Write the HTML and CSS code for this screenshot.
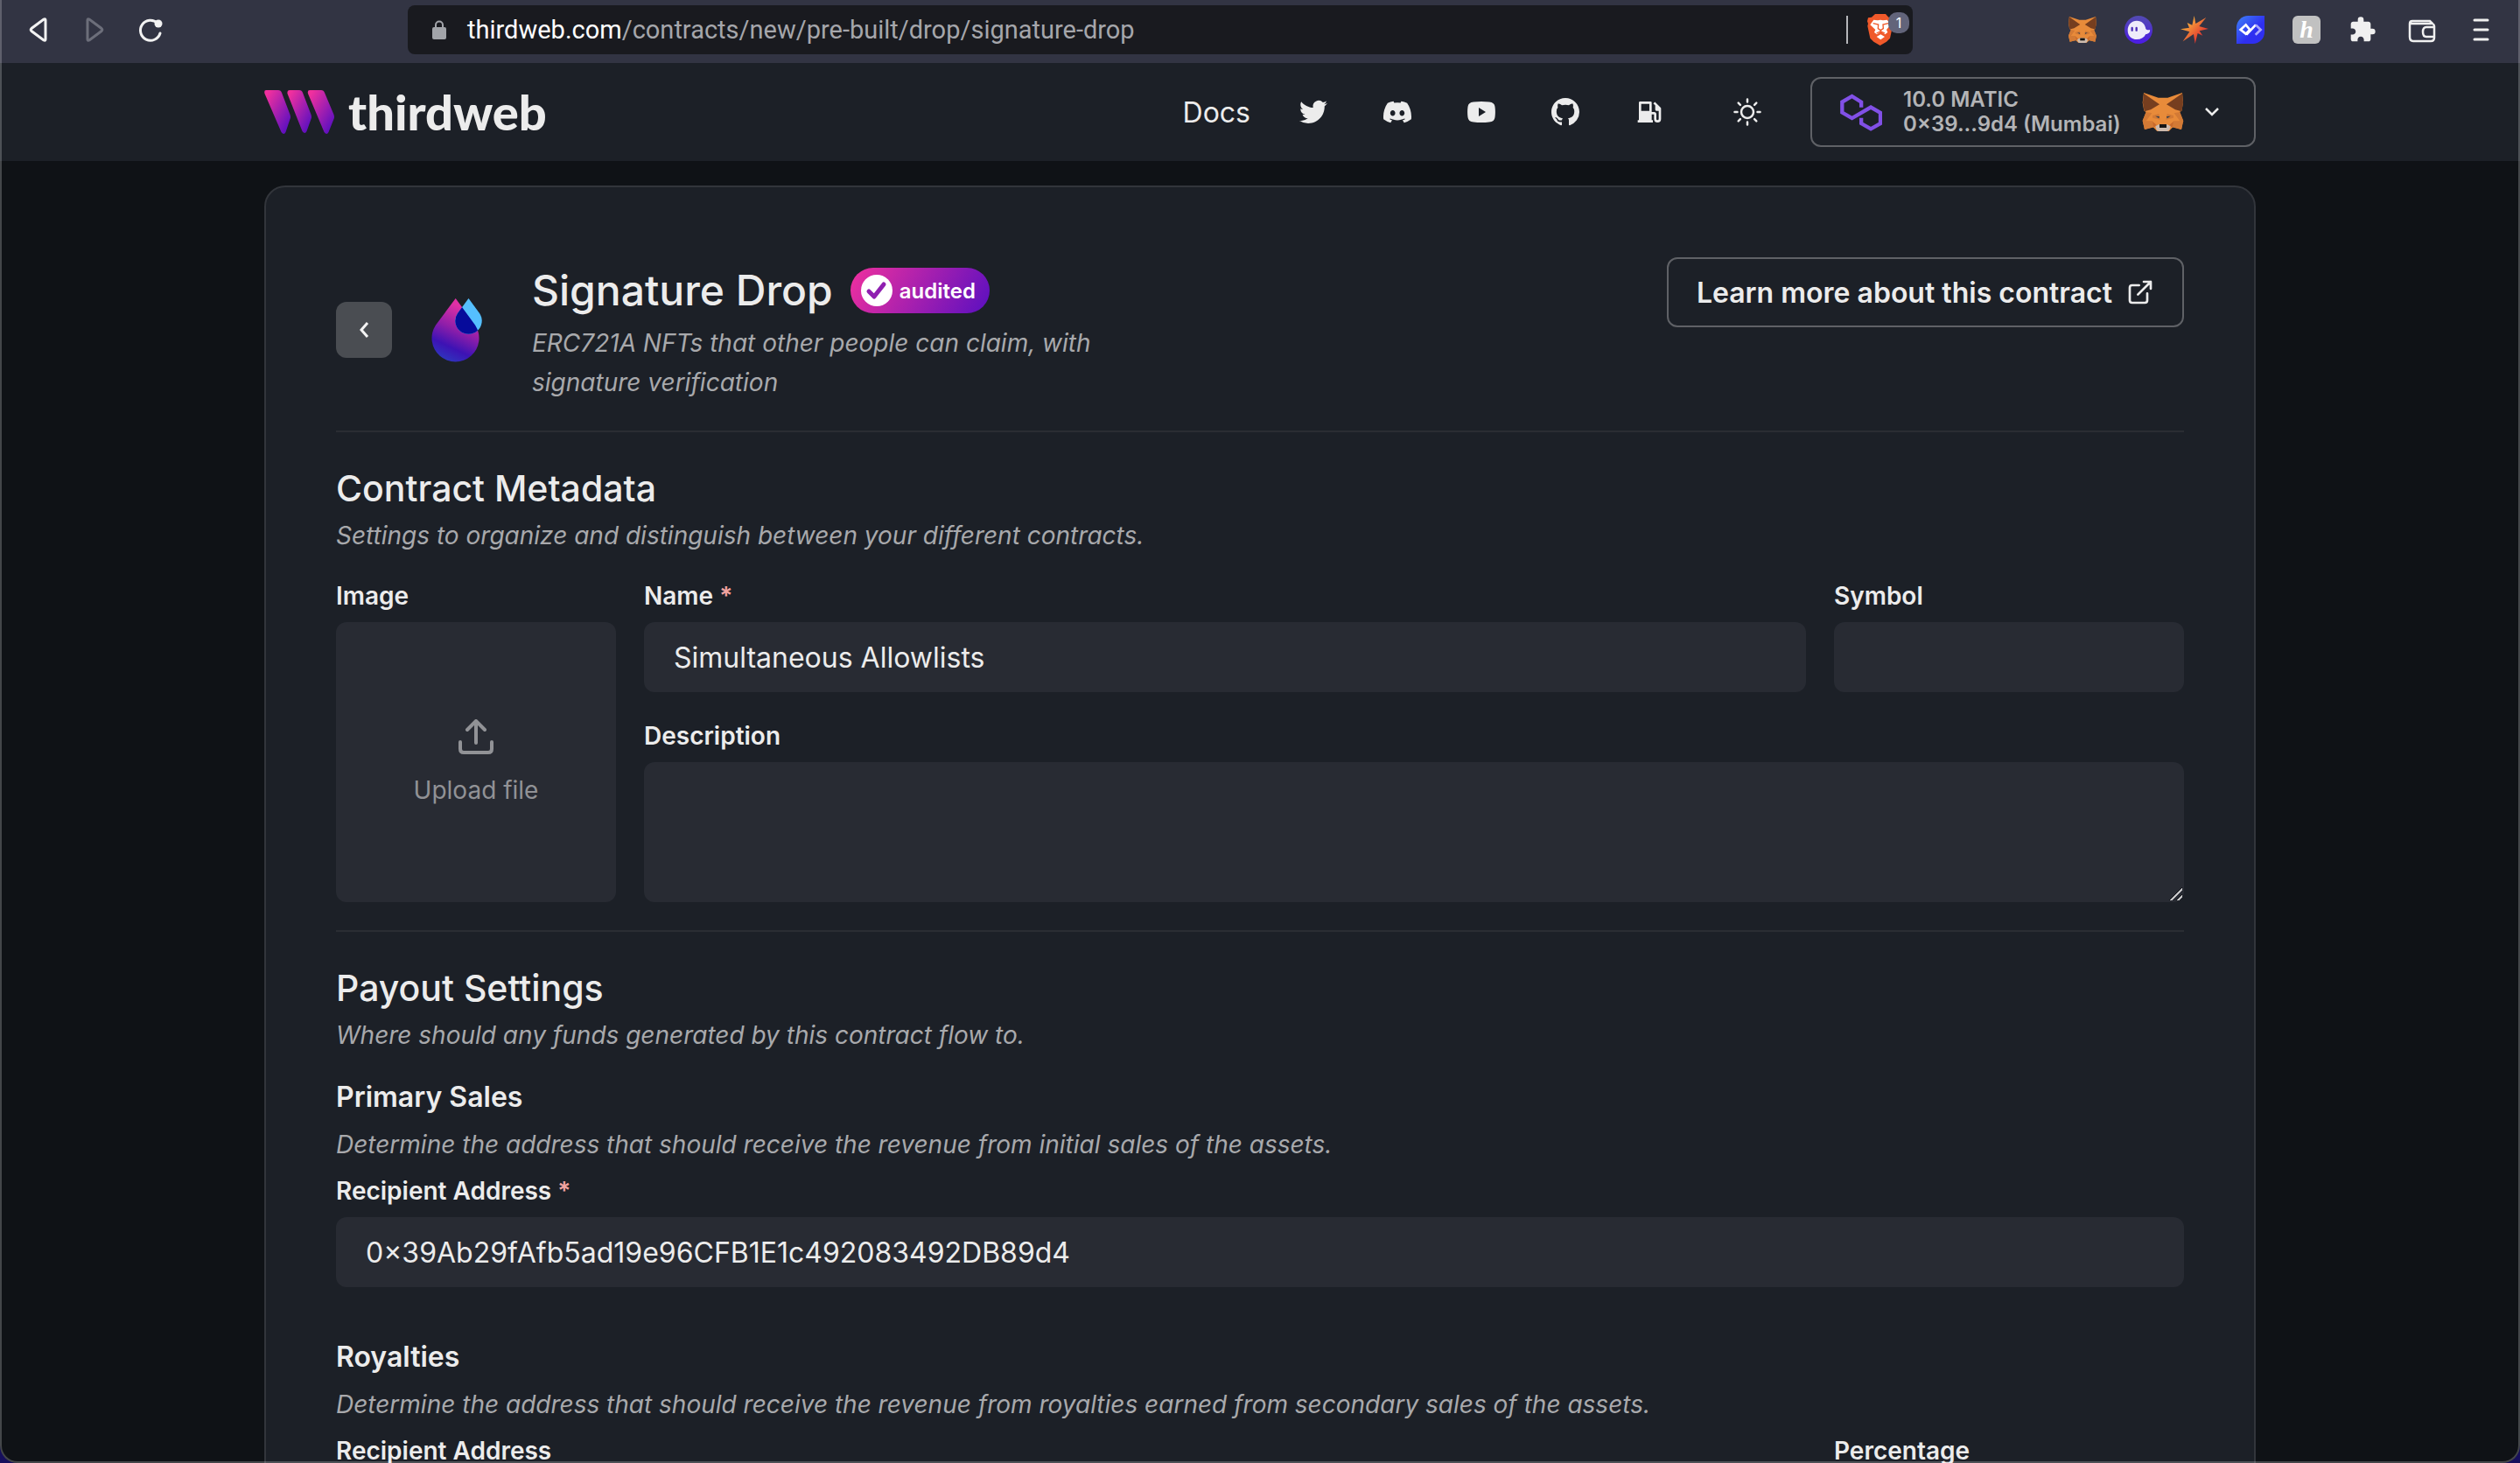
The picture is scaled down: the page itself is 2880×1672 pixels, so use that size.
FILE: index.html
```html
<!DOCTYPE html>
<html lang="en">
<head>
<meta charset="utf-8">
<meta name="viewport" content="width=device-width, initial-scale=1">
<title>Signature Drop | thirdweb</title>
<link rel="stylesheet" href="styles.css">
</head>
<body>
<svg class="defs" aria-hidden="true">
  <defs>
    <linearGradient id="brand" x1="0" y1="0" x2="1" y2="1">
      <stop offset="0.1" stop-color="#f0309e"/><stop offset="0.9" stop-color="#5a0fc0"/>
    </linearGradient>
    <symbol id="fox" viewBox="0 0 140 132">
      <path fill="#e88b3a" d="M4 0 54 17H86L136 0l3 34-5 28-7 4 12 29-6 31-29-8-14 14H50l-14-14-29 8-7-31 12-29-7-4-5-28z"/>
      <path fill="#763e1f" d="M4 2 58 40 28 58 6 64 1 34zM136 2 82 40l30 18 22 6 5-30z"/>
      <path fill="#d37a35" d="M0 97h34l6 21-33 8zM140 97h-34l-6 21 33 8zM34 78l22-6 4 20-26-6zM106 78l-22-6-4 20 26-6zM12 66l20 4-20 27H0zM128 66l-20 4 20 27h12z"/>
      <path fill="#c86a2c" d="M34 98l18 16-14 4zM106 98l-18 16 14 4z"/>
      <path fill="#cdbbae" d="M44 114l14-6h24l14 6-4 14-8 4H56l-8-4z"/>
      <path fill="#161616" d="M58 108h24v12H58z"/>
      <path fill="#3b3f4a" d="M44 80l14 1-2 7zM96 80l-14 1 2 7z"/>
    </symbol>
  </defs>
</svg>

<div class="window">
  <header class="browser">
    <div class="browser-nav">
      <button class="icon-btn" aria-label="Back"><svg width="32" height="32" viewBox="-4 0 32 32"><path d="M20 5v22q0 2-2 1L4 17.500q-1.500-1.500 0-3L18 4q2-1 2 1z" fill="none" stroke="#f2f2f2" stroke-width="3"/></svg></button>
      <button class="icon-btn" aria-label="Forward"><svg width="32" height="32" viewBox="-4 0 32 32"><path d="M4 5v22q0 2 2 1l14-10.500q1.500-1.500 0-3L6 4Q4 3 4 5z" fill="none" stroke="#6c6e7a" stroke-width="3"/></svg></button>
      <button class="icon-btn" aria-label="Reload"><svg width="32" height="32" viewBox="0 0 32 32"><path d="M24 8.500A11.500 11.500 0 1 0 27 20" fill="none" stroke="#f2f2f2" stroke-width="3" stroke-linecap="round"/><circle cx="25" cy="9" r="4.500" fill="#f2f2f2"/></svg></button>
    </div>
    <div class="address">
      <svg width="16" height="22" viewBox="0 0 16 22" aria-hidden="true"><path d="M4 9V5.500a4 4 0 0 1 8 0V9" fill="none" stroke="#a2a4a9" stroke-width="2"/><rect y="8" width="16" height="14" rx="2" fill="#a2a4a9"/></svg>
      <span class="url"><span class="host">thirdweb.com</span>/contracts/new/pre-built/drop/signature-drop</span>
      <span class="bar"></span>
      <button class="icon-btn brave" aria-label="Brave Shields">
        <svg width="30" height="36" viewBox="0 0 90 108"><path fill="#f0592a" d="M27 0h36l10 11 12 2 3 12-3 8 2 8-9 42-12 12-22 13-22-13-12-12L1 41l2-8-3-8 3-12 12-2z"/><path fill="#fff" d="M22 20l14 2 9-2 9 2 14-2 12 17-14 17 4 9-9 7-14-10-14 10-9-7 4-9L10 37zM32 78l14-8 14 8-14 10z"/><path fill="none" stroke="#f0592a" stroke-width="4" d="M20 32l18 4-1 14 9 6 9-6-1-14 18-4M46 56v7M32 66l14-7 14 7"/></svg>
        <span class="count">1</span>
      </button>
    </div>
    <div class="extensions">
      <button class="icon-btn" aria-label="MetaMask"><svg width="32" height="32"><use href="#fox"/></svg></button>
      <button class="icon-btn" aria-label="Phantom"><svg width="32" height="32" viewBox="0 0 96 96"><defs><linearGradient id="ph" x1="0" y1="0" x2="0" y2="1"><stop stop-color="#534bb1"/><stop offset="1" stop-color="#4c1be6"/></linearGradient></defs><circle cx="48" cy="48" r="48" fill="url(#ph)"/><path fill="#eeebfa" d="M11 50c0-20 14-33 31-33 18 0 29 12 31 28 2 4 9 5 14 3 2 8-5 15-14 15-6 12-17 18-31 18-18 0-31-12-31-31z"/><path stroke="#4a2bb8" stroke-width="7" stroke-linecap="round" d="M26 42v8M41 42v8"/></svg></button>
      <button class="icon-btn" aria-label="Spark"><svg width="32" height="32" viewBox="0 0 96 96"><defs><linearGradient id="sp" x1="0" y1="0" x2="1" y2="1"><stop offset=".2" stop-color="#f8b33c"/><stop offset=".8" stop-color="#e0282e"/></linearGradient></defs><path fill="url(#sp)" d="M47 0l5 27L88 6 64 36l32 9-31 7 11 16-17-8-9 36-5-33L8 88l23-33L0 46l30-5-7-17 17 8z"/></svg></button>
      <button class="icon-btn" aria-label="Wallet extension"><svg width="32" height="32" viewBox="0 0 96 96"><defs><linearGradient id="bl" x1="0" y1="0" x2="1" y2="1"><stop stop-color="#3f83f8"/><stop offset=".6" stop-color="#2f2ff0"/></linearGradient></defs><path fill="url(#bl)" d="M40 0h56v56a40 40 0 0 1-40 40H0V40A40 40 0 0 1 40 0z"/><path fill="none" stroke="#fff" stroke-width="8" d="M46 48L32 62 14 48l18-17 14 17M34 65l32-34"/><path fill="none" stroke="#a9a7fb" stroke-width="8" d="M66 31l17 17-18 17"/></svg></button>
      <button class="icon-btn" aria-label="Honey"><svg width="32" height="32" viewBox="0 0 32 32"><rect width="32" height="32" rx="6" fill="#c1c1c1"/><text x="16" y="25" class="honey" text-anchor="middle">h</text></svg></button>
      <button class="icon-btn" aria-label="Extensions"><svg width="32" height="32" viewBox="0 0 24 24"><path fill="#f0f0f0" d="M20.500 11H19V7c0-1.100-.9-2-2-2h-4V3.500a2.500 2.500 0 0 0-5 0V5H4c-1.100 0-1.990.9-1.990 2v3.800H3.500c1.490 0 2.700 1.210 2.700 2.700s-1.210 2.700-2.700 2.700H2V20c0 1.100.9 2 2 2h3.800v-1.500c0-1.490 1.210-2.700 2.700-2.700s2.700 1.210 2.700 2.700V22H17c1.100 0 2-.9 2-2v-4h1.500a2.500 2.500 0 0 0 0-5z"/></svg></button>
      <button class="icon-btn builtin" aria-label="Wallet"><svg width="32" height="32" viewBox="0 0 32 32"><path fill="none" stroke="#f0f0f0" stroke-width="2.500" d="M30 13v-1q0-2-2-3l-3-3H5Q2 6 2 9v15q0 5 4 5h20q4 0 4-4v-1M3 9h24M30 13v11h-9q-4 0-4-5.500t4-5.500z"/></svg></button>
      <button class="icon-btn builtin" aria-label="Menu"><svg width="32" height="32" viewBox="0 0 32 32"><path stroke="#f0f0f0" stroke-width="3" stroke-linecap="round" d="M8 5h15M8 16h15M8 27h15"/></svg></button>
    </div>
  </header>

  <div class="page">
    <nav class="topnav">
      <div class="container topnav-row">
        <a class="logo" href="#">
          <svg width="80" height="50" viewBox="0 0 80 50" aria-hidden="true">
            <path fill="url(#brand)" d="M2 0h14q3 0 4 3l9.500 25q1 3 0 5l-5 15q-2 4-5 0L.5 4Q-.5 0 2 0z"/>
            <path fill="url(#brand)" d="M29 0h11q3 0 4 3l9.500 25q1 3 0 5l-5 14q-2 4-5 0L26.500 4Q26 0 29 0z"/>
            <path fill="url(#brand)" d="M52 0h13q3 0 4 3l10.500 25q1 3 0 5l-6 15q-2 4-5 0L50 4Q49 0 52 0z"/>
          </svg>
          <span class="wordmark">thirdweb</span>
        </a>
        <div class="links">
          <a class="docs" href="#">Docs</a>
          <a class="social" href="#" aria-label="Twitter"><svg width="32" height="32" viewBox="0 0 24 24"><path d="M23.953 4.570a10 10 0 01-2.825.775 4.958 4.958 0 002.163-2.723c-.951.555-2.005.959-3.127 1.184a4.920 4.920 0 00-8.384 4.482C7.690 8.095 4.067 6.130 1.640 3.162a4.822 4.822 0 00-.666 2.475c0 1.710.870 3.213 2.188 4.096a4.904 4.904 0 01-2.228-.616v.060a4.923 4.923 0 003.946 4.827 4.996 4.996 0 01-2.212.085 4.936 4.936 0 004.604 3.417 9.867 9.867 0 01-6.102 2.105c-.390 0-.779-.023-1.170-.067a13.995 13.995 0 007.557 2.209c9.053 0 13.998-7.496 13.998-13.985 0-.210 0-.420-.015-.630A9.935 9.935 0 0024 4.590z"/></svg></a>
          <a class="social" href="#" aria-label="Discord"><svg width="32" height="32" viewBox="0 0 24 24"><path d="M20.317 4.370a19.791 19.791 0 0 0-4.885-1.515.074.074 0 0 0-.079.037c-.210.375-.444.864-.608 1.250a18.270 18.270 0 0 0-5.487 0 12.640 12.640 0 0 0-.617-1.250.077.077 0 0 0-.079-.037A19.736 19.736 0 0 0 3.677 4.370a.070.070 0 0 0-.032.027C.533 9.046-.320 13.580.099 18.057a.082.082 0 0 0 .031.057 19.900 19.900 0 0 0 5.993 3.030.078.078 0 0 0 .084-.028 14.090 14.090 0 0 0 1.226-1.994.076.076 0 0 0-.041-.106 13.107 13.107 0 0 1-1.872-.892.077.077 0 0 1-.008-.128 10.200 10.200 0 0 0 .372-.292.074.074 0 0 1 .077-.010c3.928 1.793 8.180 1.793 12.062 0a.074.074 0 0 1 .078.010c.120.098.246.198.373.292a.077.077 0 0 1-.006.127 12.299 12.299 0 0 1-1.873.892.077.077 0 0 0-.041.107c.360.698.772 1.362 1.225 1.993a.076.076 0 0 0 .084.028 19.839 19.839 0 0 0 6.002-3.030.077.077 0 0 0 .032-.054c.500-5.177-.838-9.674-3.549-13.660a.061.061 0 0 0-.031-.030zM8.020 15.330c-1.183 0-2.157-1.085-2.157-2.419 0-1.333.956-2.419 2.157-2.419 1.210 0 2.176 1.096 2.157 2.420 0 1.333-.956 2.418-2.157 2.418zm7.975 0c-1.183 0-2.157-1.085-2.157-2.419 0-1.333.955-2.419 2.157-2.419 1.210 0 2.176 1.096 2.157 2.420 0 1.333-.946 2.418-2.157 2.418z"/></svg></a>
          <a class="social" href="#" aria-label="YouTube"><svg width="32" height="32" viewBox="0 0 32 32"><path d="M7 4.500q9-1 18 0 6 .5 6.500 5.500.8 6 0 12-.5 5-6.500 5.500-9 1-18 0Q1 27 .5 22q-.8-6 0-12Q1 5 7 4.500zM13 11v10l8-5z"/></svg></a>
          <a class="social" href="#" aria-label="GitHub"><svg width="32" height="32" viewBox="0 0 16 16"><path d="M8 0C3.580 0 0 3.580 0 8c0 3.540 2.290 6.530 5.470 7.590.4.070.55-.170.55-.380 0-.190-.010-.820-.010-1.490-2.010.370-2.530-.490-2.690-.940-.090-.230-.480-.940-.820-1.130-.280-.150-.680-.520-.010-.530.630-.010 1.080.580 1.230.820.720 1.210 1.870.870 2.330.660.070-.520.280-.870.510-1.070-1.780-.200-3.640-.890-3.640-3.950 0-.870.310-1.590.820-2.150-.080-.200-.360-1.020.080-2.120 0 0 .670-.210 2.200.820.640-.180 1.320-.270 2-.270s1.360.090 2 .270c1.530-1.040 2.200-.820 2.200-.820.440 1.100.160 1.920.080 2.120.510.560.820 1.270.820 2.150 0 3.070-1.870 3.750-3.650 3.950.290.250.540.730.540 1.480 0 1.070-.010 1.930-.010 2.200 0 .210.150.460.550.380A8.010 8.010 0 0 0 16 8c0-4.420-3.580-8-8-8z"/></svg></a>
          <a class="social" href="#" aria-label="Gas"><svg width="32" height="32" viewBox="0 0 24 24"><path d="M3 19V4a1 1 0 0 1 1-1h9a1 1 0 0 1 1 1v8h2a2 2 0 0 1 2 2v4a1 1 0 0 0 2 0v-7h-2a1 1 0 0 1-1-1V6.414l-1.657-1.657 1.414-1.414 4.950 4.950A.997.997 0 0 1 22 9v9a3 3 0 0 1-6 0v-4h-2v5h1v2H2v-2h1zM5 5v6h7V5H5z"/></svg></a>
          <button class="social theme" aria-label="Toggle theme"><svg width="32" height="32" viewBox="0 0 32 32"><g fill="none" stroke="#ececec" stroke-width="2.500" stroke-linecap="round"><circle cx="16" cy="16" r="7"/><path d="M16 1.500v3M16 27.500v3M1.500 16h3M27.500 16h3M5.700 5.700l2.200 2.200M24.100 24.100l2.200 2.200M26.300 5.700l-2.200 2.200M7.900 24.100l-2.200 2.200"/></g></svg></button>
        </div>
        <button class="wallet">
          <svg width="48" height="43" viewBox="0 0 145 128" aria-hidden="true"><path fill="none" stroke="#8150e6" stroke-width="13" d="M73 47V28L41 8 7 28v36l34 20 65-38 33 19v37l-33 19-33-19V83"/></svg>
          <span class="wallet-text">10.0 MATIC<br>0×39...9d4 (Mumbai)</span>
          <svg width="48" height="44" aria-hidden="true"><use href="#fox"/></svg>
          <svg width="16" height="10" viewBox="0 0 16 10" aria-hidden="true"><path fill="none" stroke="#ececec" stroke-width="2.500" d="M1 1l7 7 7-7"/></svg>
        </button>
      </div>
    </nav>

    <main class="container">
      <form class="card">
        <header class="card-head">
          <button type="button" class="back" aria-label="Go back"><svg width="12" height="20" viewBox="0 0 12 20"><path fill="none" stroke="#f4f4f4" stroke-width="3" d="M10 2L3 10l7 8"/></svg></button>
          <svg width="96" height="96" viewBox="0 0 96 96" aria-hidden="true">
            <defs>
              <linearGradient id="drop" x1=".7" y1="0" x2=".35" y2="1"><stop offset=".15" stop-color="#df30a4"/><stop offset=".5" stop-color="#8f1ea9"/><stop offset=".78" stop-color="#3d12b4"/><stop offset="1" stop-color="#2f35bd"/></linearGradient>
              <clipPath id="dropclip"><path d="M40.700 12L18 42.500A27 27 0 1 0 63 42.500z"/></clipPath>
            </defs>
            <path fill="url(#drop)" d="M40.700 12L18 42.500A27 27 0 1 0 63 42.500z"/>
            <path fill="#55bfff" d="M55.500 12L43 29A15.200 15.200 0 1 0 68 29z"/>
            <path fill="#060b9b" clip-path="url(#dropclip)" d="M55.500 12L43 29A15.200 15.200 0 1 0 68 29z"/>
          </svg>
          <div class="intro">
            <div class="title-row">
              <h1>Signature Drop</h1>
              <span class="audited"><svg width="36" height="36" viewBox="0 0 36 36" aria-hidden="true"><circle cx="18" cy="18" r="18" fill="#fff"/><path fill="none" stroke="#8f1fb0" stroke-width="5" stroke-linecap="round" stroke-linejoin="round" d="M9 19l6 6L26 11"/></svg>audited</span>
            </div>
            <p>ERC721A NFTs that other people can claim, with signature verification</p>
          </div>
          <a class="learn" href="#">Learn more about this contract<svg width="32" height="32" viewBox="0 0 24 24" aria-hidden="true"><path fill="none" stroke="#ececec" stroke-width="2" stroke-linecap="round" stroke-linejoin="round" d="M18 13v6a2 2 0 0 1-2 2H5a2 2 0 0 1-2-2V8a2 2 0 0 1 2-2h6M15 3h6v6M10 14L21 3"/></svg></a>
        </header>

        <section>
          <h2>Contract Metadata</h2>
          <p>Settings to organize and distinguish between your different contracts.</p>
          <div class="metadata">
            <div class="field image-field">
              <label for="image">Image</label>
              <button type="button" id="image" class="upload">
                <svg width="40" height="40" viewBox="0 0 40 40" aria-hidden="true"><path fill="none" stroke="#919296" stroke-width="4" stroke-linecap="round" stroke-linejoin="round" d="M2 26v8q0 4 4 4h28q4 0 4-4v-8M20 27V3M10 12L20 2l10 10"/></svg>
                Upload file
              </button>
            </div>
            <div class="field">
              <label for="name">Name <span class="req">*</span></label>
              <input id="name" type="text" value="Simultaneous Allowlists" required>
            </div>
            <div class="field">
              <label for="symbol">Symbol</label>
              <input id="symbol" type="text">
            </div>
            <div class="field description-field">
              <label for="description">Description</label>
              <textarea id="description"></textarea>
            </div>
          </div>
        </section>

        <section>
          <h2>Payout Settings</h2>
          <p>Where should any funds generated by this contract flow to.</p>
          <div class="group">
            <h3>Primary Sales</h3>
            <p>Determine the address that should receive the revenue from initial sales of the assets.</p>
            <div class="field">
              <label for="recipient">Recipient Address <span class="req">*</span></label>
              <input id="recipient" type="text" value="0×39Ab29fAfb5ad19e96CFB1E1c492083492DB89d4" required>
            </div>
          </div>
          <div class="group">
            <h3>Royalties</h3>
            <p>Determine the address that should receive the revenue from royalties earned from secondary sales of the assets.</p>
            <div class="royalty">
              <div class="field">
                <label for="royalty-recipient">Recipient Address</label>
                <input id="royalty-recipient" type="text">
              </div>
              <div class="field">
                <label for="percentage">Percentage</label>
                <input id="percentage" type="text">
              </div>
            </div>
          </div>
        </section>
      </form>
    </main>
  </div>
  <div class="edge"></div>
</div>
</body>
</html>
```
FILE: styles.css
```css
* {
  box-sizing: border-box;
}

body {
  margin: 0;
  background: #0f1216;
  color: #ececec;
  font-family: Inter, "Liberation Sans", sans-serif;
  font-size: 28px;
}

button,
input,
textarea {
  font: inherit;
  color: inherit;
}

button {
  padding: 0;
  border: 0;
  background: none;
}

a {
  color: inherit;
  text-decoration: none;
}

h1,
h2,
h3,
p {
  margin: 0;
}

svg {
  display: block;
  flex: none;
}

.defs {
  position: absolute;
  width: 0;
  height: 0;
}

.window {
  display: flex;
  flex-direction: column;
  height: 100vh;
  overflow: hidden;
}

.edge {
  position: fixed;
  inset: 0;
  border: 2px solid rgba(255, 255, 255, 0.22);
  border-top: 0;
  border-radius: 0 0 20px 20px;
  box-shadow: 0 0 0 20px #160f5c;
  pointer-events: none;
}

/* Browser toolbar */
.browser {
  display: flex;
  flex: none;
  align-items: center;
  height: 72px;
  padding: 0 28px 4px;
  background: #323443;
}

.icon-btn {
  position: relative;
  display: flex;
  align-items: center;
}

.browser-nav {
  display: flex;
  gap: 32px;
  flex: 0 0 438px;
}

.address {
  display: flex;
  flex: 1;
  align-items: center;
  max-width: 1720px;
  height: 56px;
  padding: 0 22px 0 28px;
  border-radius: 8px;
  background: #191a1f;
}

.url {
  flex: 1;
  padding-left: 24px;
  color: #a5a6ab;
  font-family: Roboto, "Liberation Sans", sans-serif;
  font-size: 29px;
}

.host {
  color: #fff;
}

.bar {
  width: 2px;
  height: 32px;
  margin-right: 22px;
  background: #b5b6ba;
}

.count {
  position: absolute;
  top: -2px;
  left: 24px;
  width: 24px;
  height: 24px;
  border-radius: 10px;
  background: #62647a;
  color: #fff;
  font-size: 16px;
  line-height: 24px;
  text-align: center;
}

.extensions {
  display: flex;
  gap: 32px;
  margin-left: auto;
}

.builtin {
  margin-left: 4px;
}

.honey {
  fill: #fff;
  font: italic bold 28px "Liberation Serif", serif;
}

/* Site */
.page {
  flex: 1;
  min-height: 0;
  overflow-y: auto;
  scrollbar-width: none;
}

.container {
  width: 100%;
  max-width: 2340px;
  margin: 0 auto;
  padding: 0 32px;
}

.topnav {
  background: #1c2027;
}

.topnav-row {
  display: flex;
  align-items: center;
  height: 112px;
}

.logo {
  display: flex;
  align-items: center;
  gap: 16px;
}

.wordmark {
  font-family: Lato, sans-serif;
  font-size: 56px;
  font-weight: 900;
  line-height: 56px;
}

.links {
  display: flex;
  align-items: center;
  gap: 16px;
  margin-left: auto;
}

.docs {
  padding-right: 16px;
  font-size: 32px;
}

.social {
  display: flex;
  justify-content: center;
  width: 80px;
  fill: #ececec;
}

.theme {
  margin: 0 32px 0 16px;
}

.wallet {
  display: flex;
  align-items: center;
  gap: 24px;
  width: 509px;
  height: 80px;
  padding: 0 40px 0 32px;
  border: 2px solid #5f6166;
  border-radius: 12px;
}

.wallet-text {
  flex: 1;
  color: #b3b4b6;
  font-size: 24px;
  font-weight: 600;
  line-height: 28px;
  text-align: left;
  white-space: nowrap;
}

.card {
  margin-top: 28px;
  padding: 80px;
  border: 2px solid #32353b;
  border-radius: 24px;
  background: #1c2027;
}

.card p {
  color: #a8a9ac;
  font-style: italic;
  line-height: 45px;
}

.card-head {
  display: flex;
  align-items: center;
  gap: 32px;
}

.back {
  display: flex;
  align-items: center;
  justify-content: center;
  width: 64px;
  height: 64px;
  border-radius: 12px;
  background: #4a4d52;
}

.intro {
  flex: 0 1 680px;
}

.title-row {
  display: flex;
  align-items: center;
  gap: 20px;
}

h1 {
  font-size: 48px;
  font-weight: 500;
  line-height: 76px;
}

.audited {
  display: flex;
  align-items: center;
  gap: 8px;
  height: 52px;
  padding: 0 16px 0 12px;
  border-radius: 26px;
  background: linear-gradient(120deg, #f0309e, #5a0fc0);
  color: #fff;
  font-size: 24px;
  font-weight: 600;
}

.learn {
  display: flex;
  align-items: center;
  align-self: flex-start;
  gap: 16px;
  height: 80px;
  margin-left: auto;
  padding: 0 32px;
  border: 2px solid #5f6166;
  border-radius: 12px;
  font-size: 32px;
  font-weight: 600;
}

section {
  margin-top: 32px;
  padding-top: 32px;
  border-top: 2px solid #2a2d33;
}

h2 {
  font-size: 41px;
  font-weight: 500;
  line-height: 64px;
}

h3 {
  font-size: 32px;
  font-weight: 600;
  line-height: 64px;
}

.metadata {
  display: grid;
  grid-template-columns: 320px 1fr 400px;
  gap: 32px;
  margin-top: 28px;
}

.image-field {
  grid-row: span 2;
}

.description-field {
  grid-column: span 2;
}

.field {
  display: flex;
  flex-direction: column;
  gap: 12px;
}

label {
  font-weight: 600;
  line-height: 36px;
}

.req {
  color: #f0a3a0;
}

input,
textarea,
.upload {
  display: block;
  width: 100%;
  border: 2px solid transparent;
  border-radius: 12px;
  background: #282b33;
}

input {
  height: 80px;
  padding: 0 32px;
  font-size: 32px;
}

textarea {
  height: 160px;
  padding: 16px 32px;
  font-size: 32px;
  resize: vertical;
}

textarea::-webkit-resizer {
  background: linear-gradient(135deg, transparent 48%, #0f1216 48% 53%, #c4c4c6 53% 61%, transparent 61% 75%, #0f1216 75% 80%, #c4c4c6 80% 88%, transparent 88%);
}

.upload {
  display: flex;
  flex-direction: column;
  align-items: center;
  justify-content: center;
  gap: 24px;
  height: 320px;
  color: #919296;
}

.group {
  margin-top: 16px;
}

.group + .group {
  margin-top: 48px;
}

.group .field {
  margin-top: 12px;
}

.royalty {
  display: grid;
  grid-template-columns: 1fr 400px;
  gap: 32px;
}
```
